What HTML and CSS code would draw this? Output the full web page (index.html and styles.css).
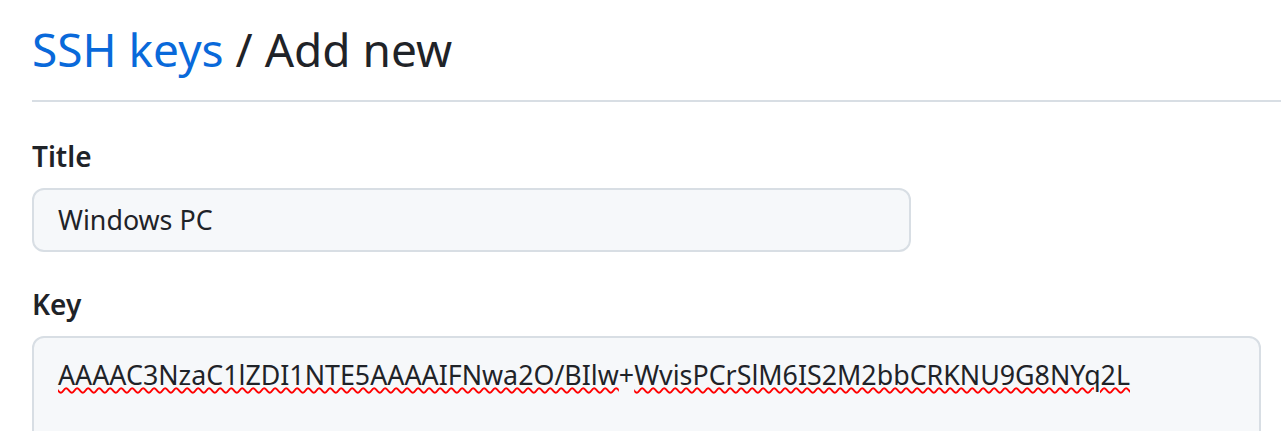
FILE: index.html
```html
<!DOCTYPE html>
<html>
<head>
<meta charset="utf-8">
<link rel="stylesheet" href="styles.css">
</head>
<body>
<div class="page">
  <div class="subhead">
    <h2 class="subhead-heading"><a class="crumb" href="#">SSH keys</a> / Add new</h2>
  </div>
  <div class="form-group">
    <label class="label">Title</label>
    <div class="input title-input">Windows PC</div>
  </div>
  <div class="form-group">
    <label class="label">Key</label>
    <div class="input key-input"><span class="misspelled">AAAAC3NzaC1lZDI1NTE5AAAAIFNwa2O/BIlw</span>+<span class="misspelled">WvisPCrSlM6IS2M2bbCRKNU9G8NYq2L</span></div>
  </div>
</div>
</body>
</html>
```
FILE: styles.css
```css
html, body {
  margin: 0;
  padding: 0;
  background: #ffffff;
}
body {
  font-family: "Noto Sans", "Open Sans", sans-serif;
  color: #1f2328;
  overflow: hidden;
}
.page {
  padding: 0 0 0 32px;
}
.subhead {
  padding-top: 13px;
  padding-bottom: 15px;
  border-bottom: 2px solid #d8dee4;
  margin-bottom: 34px;
}
.subhead-heading {
  margin: 0;
  font-size: 46px;
  font-weight: 400;
  line-height: 72px;
}
.crumb {
  color: #0969da;
  text-decoration: none;
}
.form-group {
  margin-bottom: 32px;
}
.label {
  display: block;
  font-size: 28px;
  font-weight: 600;
  line-height: 40px;
  margin-bottom: 12px;
}
.input {
  box-sizing: border-box;
  background: #f6f8fa;
  border: 2px solid #d8dee4;
  border-radius: 12px;
  font-size: 26.8px;
  padding: 0 24px;
}
.title-input {
  width: 879px;
  height: 64px;
  line-height: 60px;
}
.key-input {
  width: 1229px;
  height: 200px;
  padding-top: 17px;
  line-height: 40px;
}
.misspelled {
  text-decoration: underline wavy #ff0000;
  text-decoration-thickness: 1.5px;
  text-underline-offset: 2px;
}
```
